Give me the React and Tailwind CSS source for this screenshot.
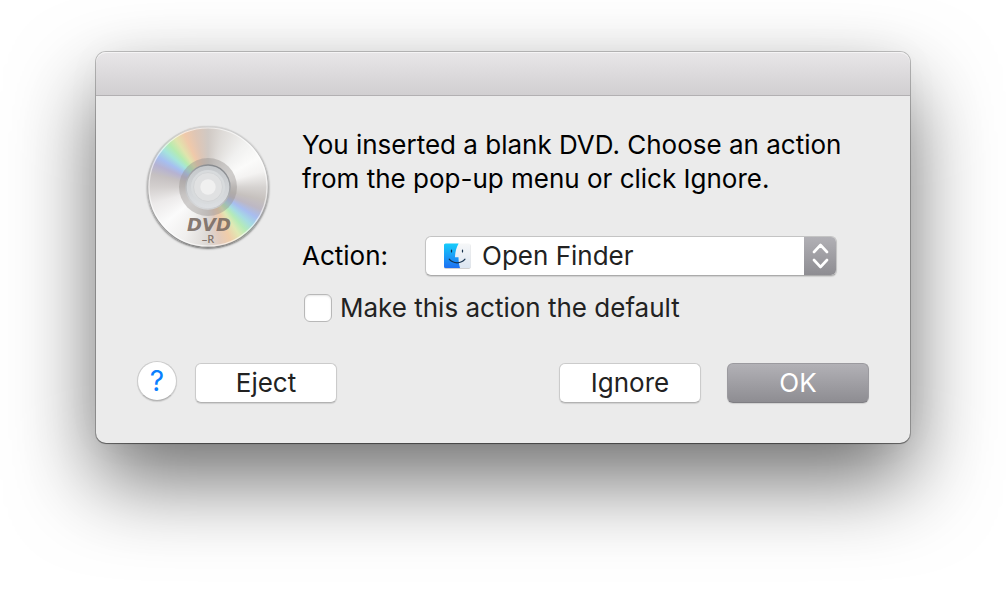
import { useState } from "react";

function DiscIcon() {
  return (
    <div
      role="img"
      aria-label="DVD-R disc"
      className="relative size-[122px] shrink-0 rounded-full bg-[conic-gradient(#d0c9c4_0deg,#dedbd8_15deg,#f1f1f0_40deg,#fbfbfa_60deg,#f4f3f2_74deg,#d6d3d1_90deg,#c6c1be_103deg,#bdb8c4_113deg,#a8bdf0_122deg,#a6dce2_131deg,#b5ebb8_139deg,#e0e9b4_147deg,#f0cda9_157deg,#e2cbbd_168deg,#dcd8d5_180deg,#f0efee_205deg,#fbfbfb_230deg,#eceaea_253deg,#d3cfce_270deg,#c5c0c1_283deg,#b6b3d2_293deg,#a6bff0_301deg,#a5e4dc_310deg,#b6ebb0_318deg,#e0e4ad_326deg,#f0c9aa_336deg,#dec6b6_347deg,#d0c9c4_360deg)] shadow-[0_1px_2px_rgba(0,0,0,0.5)]"
    >
      <svg viewBox="0 0 122 122" className="absolute inset-0 size-full">
        <defs>
          <linearGradient id="rim" x1="0" y1="0" x2="0" y2="1">
            <stop offset="0" stopColor="#d2d2d2" />
            <stop offset="0.6" stopColor="#b0b0b0" />
            <stop offset="1" stopColor="#8a8a8a" />
          </linearGradient>
          <linearGradient id="hub" x1="0" y1="0" x2="0" y2="1">
            <stop offset="0" stopColor="#c4c7ca" />
            <stop offset="1" stopColor="#dde0e3" />
          </linearGradient>
          <linearGradient id="hubEdge" x1="0.7" y1="0" x2="0.3" y2="1">
            <stop offset="0" stopColor="#85888c" />
            <stop offset="0.6" stopColor="#b4b6b9" />
            <stop offset="1" stopColor="#d9dbdd" />
          </linearGradient>
        </defs>
        <circle cx="61" cy="61" r="60.3" fill="none" stroke="url(#rim)" strokeWidth="1.4" />
        <circle cx="61" cy="61" r="59" fill="none" stroke="#fff" strokeOpacity="0.6" strokeWidth="1.2" />
        <circle cx="61" cy="61" r="29" fill="#96928f" fillOpacity="0.44" />
        <circle cx="61" cy="61" r="22" fill="url(#hub)" stroke="url(#hubEdge)" strokeWidth="1.4" />
        <circle cx="61" cy="61" r="17" fill="#d8dbdd" />
        <circle cx="61" cy="61" r="14.5" fill="#e0e1e2" stroke="#d3d5d7" strokeWidth="1" />
        <circle cx="61" cy="61" r="7.7" fill="#f0f0f0" />
        <text textAnchor="middle" fill="#786a62" fillOpacity="0.9">
          <tspan x="62" y="105" fontFamily="DejaVu Sans, sans-serif" fontSize="18" fontWeight="bold" fontStyle="italic">
            DVD
          </tspan>
          <tspan x="61" y="117" fontFamily="Open Sans, sans-serif" fontSize="11" fontWeight="600">
            –R
          </tspan>
        </text>
      </svg>
    </div>
  );
}

function FinderIcon() {
  return (
    <svg viewBox="0 0 28 28" className="pointer-events-none absolute left-[17px] top-[5px] size-7" aria-hidden="true">
      <defs>
        <linearGradient id="finderBlue" x1="0" y1="0" x2="0" y2="1">
          <stop offset="0" stopColor="#17cdfb" />
          <stop offset="1" stopColor="#1d70f2" />
        </linearGradient>
        <linearGradient id="finderLight" x1="0" y1="0" x2="0" y2="1">
          <stop offset="0" stopColor="#f6f7f8" />
          <stop offset="1" stopColor="#dce6f2" />
        </linearGradient>
      </defs>
      <rect x="1" y="2" width="26.6" height="25" rx="1.8" fill="#000" fillOpacity="0.18" />
      <rect x="1" y="1.5" width="26.5" height="24.6" rx="1.6" fill="url(#finderLight)" />
      <path
        d="M2.6 1.5H15.6C13.2 5.8 12.2 10.2 12 15.2H15.5C15.5 19 16 22.6 17 26.1H2.6A1.6 1.6 0 0 1 1 24.5V3.1A1.6 1.6 0 0 1 2.6 1.5Z"
        fill="url(#finderBlue)"
      />
      <path d="M8.5 8V10M19.5 8V10" stroke="#14304c" strokeWidth="1.2" strokeLinecap="round" />
      <path d="M6.2 17.2C10.3 22 18 22 22 17.2" fill="none" stroke="#14304c" strokeWidth="1.2" strokeLinecap="round" />
    </svg>
  );
}

function PushButton({ children }) {
  return (
    <button
      type="button"
      className="h-10 w-[142px] rounded-md border border-[#cbcbcb] border-b-[#b2b2b2] bg-white text-[#222] shadow-[0_1px_1px_rgba(0,0,0,0.12)]"
    >
      {children}
    </button>
  );
}

export default function App() {
  const [makeDefault, setMakeDefault] = useState(false);

  return (
    <main className="flex min-h-screen items-start justify-center bg-white px-10 pt-[52px] pb-20 font-['Inter','Liberation_Sans',sans-serif] text-[26px] leading-[34px] text-black">
      <section
        role="dialog"
        aria-labelledby="message"
        className="w-full max-w-[814px] rounded-[10px] bg-[#ebebeb] shadow-[0_0_0_1px_rgba(0,0,0,0.22),0_1px_1px_rgba(0,0,0,0.35),0_38px_84px_rgba(0,0,0,0.56),0_0_40px_rgba(0,0,0,0.03)]"
      >
        <header className="h-11 rounded-t-[10px] border-b border-[#b2b0b2] bg-linear-to-b from-[#e8e6e8] to-[#d1cfd1] shadow-[inset_0_1px_0_#f5f4f5]" />

        <div className="flex gap-8 px-[51px] pt-8">
          <div className="-mt-0.5">
            <DiscIcon />
          </div>
          <div className="min-w-0 flex-1 pl-px">
            <h1 id="message" className="max-w-[550px]">
              You inserted a blank DVD. Choose an action from the pop-up menu or click Ignore.
            </h1>

            <div className="mt-10 flex items-center">
              <label htmlFor="action" className="w-[123px] shrink-0">
                Action:
              </label>
              <div className="relative flex h-10 w-full max-w-[412px] overflow-hidden rounded-md border border-[#c4c4c4] border-b-[#ababab] bg-white shadow-[0_1px_1px_rgba(0,0,0,0.12)]">
                <FinderIcon />
                <select
                  id="action"
                  className="w-full appearance-none bg-transparent pl-14 leading-[34px] text-[#222] outline-none"
                >
                  <option>Open Finder</option>
                </select>
                <span className="pointer-events-none absolute -top-px -right-px flex h-10 w-[33px] items-center justify-center border-b border-[#7f7e83] bg-linear-to-b from-[#b2b1b6] to-[#8e8d92]">
                  <svg viewBox="0 0 33 40" className="h-10 w-[33px]" aria-hidden="true">
                    <path
                      d="M10 16L16.5 9L23 16M10 24L16.5 31L23 24"
                      fill="none"
                      stroke="#fff"
                      strokeWidth="2.6"
                      strokeLinecap="round"
                      strokeLinejoin="round"
                    />
                  </svg>
                </span>
              </div>
            </div>

            <div className="mt-[15px] flex items-center gap-2 pl-0.5 text-[#222]">
              <input
                id="make-default"
                type="checkbox"
                checked={makeDefault}
                onChange={(e) => setMakeDefault(e.target.checked)}
                className="size-7 shrink-0 appearance-none rounded-md border border-[#b8b8b8] bg-white shadow-[inset_0_1px_2px_rgba(0,0,0,0.1)] checked:bg-[#8e8d92]"
              />
              <label htmlFor="make-default">Make this action the default</label>
            </div>
          </div>
        </div>

        <footer className="flex items-center px-[41px] pt-9 pb-[38px]">
          <button
            type="button"
            aria-label="Help"
            className="mb-1 mr-[18px] size-10 rounded-full border border-[#cbcbcb] border-b-[#b2b2b2] bg-white text-[28px] text-[#0a7fff] shadow-[0_1px_1px_rgba(0,0,0,0.12)]"
          >
            ?
          </button>
          <PushButton>Eject</PushButton>
          <div className="ml-auto flex gap-[26px]">
            <PushButton>Ignore</PushButton>
            <button
              type="button"
              className="h-10 w-[142px] rounded-md border border-[#9b9a9f] border-b-[#7f7e83] bg-linear-to-b from-[#b2b1b6] to-[#8e8d92] text-white shadow-[0_1px_1px_rgba(0,0,0,0.12)]"
            >
              OK
            </button>
          </div>
        </footer>
      </section>
    </main>
  );
}
